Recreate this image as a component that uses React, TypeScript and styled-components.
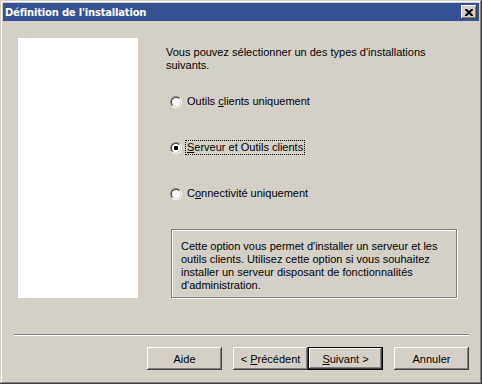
import React from 'react';
import styled, { createGlobalStyle } from 'styled-components';

const GlobalStyle = createGlobalStyle`
	html, body {
		margin: 0;
		padding: 0;
		background: #d4d0c8;
	}
	body {
		font-family: 'Liberation Sans', Arial, sans-serif;
		font-size: 11px;
		color: #000;
	}
`;

const Window = styled.div`
	width: 482px;
	height: 384px;
	box-sizing: border-box;
	padding: 3px;
	background: #d4d0c8;
	display: flex;
	flex-direction: column;
	box-shadow: inset -1px -1px #404040, inset 1px 1px #d4d0c8, inset -2px -2px #808080, inset 2px 2px #ffffff;
`;

const TitleBar = styled.div`
	height: 18px;
	flex-shrink: 0;
	background: #375294;
	display: flex;
	align-items: center;
	justify-content: space-between;
	padding: 0 2px 0 2px;
`;

const Title = styled.span`
	color: #fff;
	font-family: 'DejaVu Sans', Verdana, sans-serif;
	font-weight: bold;
	font-size: 10px;
	letter-spacing: -0.2px;
`;

const CloseButton = styled.div`
	width: 16px;
	height: 14px;
	box-sizing: border-box;
	background: #d4d0c8;
	display: flex;
	align-items: center;
	justify-content: center;
	box-shadow: inset -1px -1px #404040, inset 1px 1px #ffffff, inset -2px -2px #808080;
`;

const Body = styled.div`
	flex: 1;
	display: flex;
	flex-direction: column;
	padding: 17px 10px 0 11px;
`;

const Main = styled.div`
	display: flex;
	padding-left: 4px;
`;

const SidePanel = styled.div`
	width: 120px;
	height: 260px;
	background: #fff;
	flex-shrink: 0;
`;

const Content = styled.div`
	margin-left: 28px;
	flex: 1;
	display: flex;
	flex-direction: column;
`;

const Intro = styled.p`
	margin: 8px 0 0 0;
	line-height: 13px;
`;

const Options = styled.div`
	margin-top: 22px;
	display: flex;
	flex-direction: column;
	gap: 31px;
`;

const OptionRow = styled.div`
	height: 15px;
	display: flex;
	align-items: center;
	padding-left: 4px;
`;

const RadioOuter = styled.span`
	width: 12px;
	height: 12px;
	box-sizing: border-box;
	border-radius: 50%;
	border: 1px solid;
	border-color: #808080 #ffffff #ffffff #808080;
	display: flex;
	flex-shrink: 0;
`;

const RadioInner = styled.span`
	flex: 1;
	border-radius: 50%;
	border: 1px solid;
	border-color: #404040 #d4d0c8 #d4d0c8 #404040;
	background: #fff;
	display: flex;
	align-items: center;
	justify-content: center;
`;

const RadioDot = styled.span`
	width: 4px;
	height: 4px;
	border-radius: 1px;
	background: #000;
`;

const OptionLabel = styled.span<{ $focused?: boolean }>`
	margin-left: 3px;
	padding: 0 1px;
	line-height: 13px;
	border: 1px ${({ $focused }) => ($focused ? 'dotted #000' : 'solid transparent')};
`;

const InfoBox = styled.div`
	margin: 28px 0 0 5px;
	width: 286px;
	height: 69px;
	box-sizing: border-box;
	border: 1px solid #808080;
	box-shadow: inset 1px 1px #ffffff, 1px 1px #ffffff;
	padding: 10px 8px 0 9px;
	line-height: 13px;
`;

const Separator = styled.div`
	margin-top: 36px;
	border-top: 1px solid #808080;
	border-bottom: 1px solid #ffffff;
	height: 0;
`;

const ButtonRow = styled.div`
	margin-top: 11px;
	display: flex;
	justify-content: flex-end;
`;

const Button = styled.button<{ $default?: boolean; $gap?: number }>`
	width: 75px;
	height: 23px;
	margin-left: ${({ $gap }) => $gap ?? 0}px;
	padding: 0;
	background: #d4d0c8;
	font-family: 'Liberation Sans', Arial, sans-serif;
	font-size: 11px;
	color: #000;
	border: ${({ $default }) => ($default ? '1px solid #000' : 'none')};
	box-shadow: inset -1px -1px #404040, inset 1px 1px #ffffff, inset -2px -2px #808080;
	box-sizing: border-box;
`;

const Radio = ({ checked }: { checked?: boolean }) => (
	<RadioOuter>
		<RadioInner>{checked && <RadioDot />}</RadioInner>
	</RadioOuter>
);

export default function App() {
	return (
		<>
			<GlobalStyle />
			<Window>
				<TitleBar>
					<Title>Définition de l'installation</Title>
					<CloseButton>
						<svg width="8" height="7" viewBox="0 0 8 7">
							<path d="M0 0h2l2 2 2-2h2v1L5.5 3.5 8 6v1H6L4 5 2 7H0V6l2.5-2.5L0 1z" fill="#000" />
						</svg>
					</CloseButton>
				</TitleBar>
				<Body>
					<Main>
						<SidePanel />
						<Content>
							<Intro>
								Vous pouvez sélectionner un des types d'installations
								<br />
								suivants.
							</Intro>
							<Options>
								<OptionRow>
									<Radio />
									<OptionLabel>
										Outils <u>c</u>lients uniquement
									</OptionLabel>
								</OptionRow>
								<OptionRow>
									<Radio checked />
									<OptionLabel $focused>
										<u>S</u>erveur et Outils clients
									</OptionLabel>
								</OptionRow>
								<OptionRow>
									<Radio />
									<OptionLabel>
										C<u>o</u>nnectivité uniquement
									</OptionLabel>
								</OptionRow>
							</Options>
							<InfoBox>
								Cette option vous permet d'installer un serveur et les
								<br />
								outils clients. Utilisez cette option si vous souhaitez
								<br />
								installer un serveur disposant de fonctionnalités
								<br />
								d'administration.
							</InfoBox>
						</Content>
					</Main>
					<Separator />
					<ButtonRow>
						<Button>Aide</Button>
						<Button $gap={11}>
							&lt; <u>P</u>récédent
						</Button>
						<Button $default>
							<u>S</u>uivant &gt;
						</Button>
						<Button $gap={11}>Annuler</Button>
					</ButtonRow>
				</Body>
			</Window>
		</>
	);
}
